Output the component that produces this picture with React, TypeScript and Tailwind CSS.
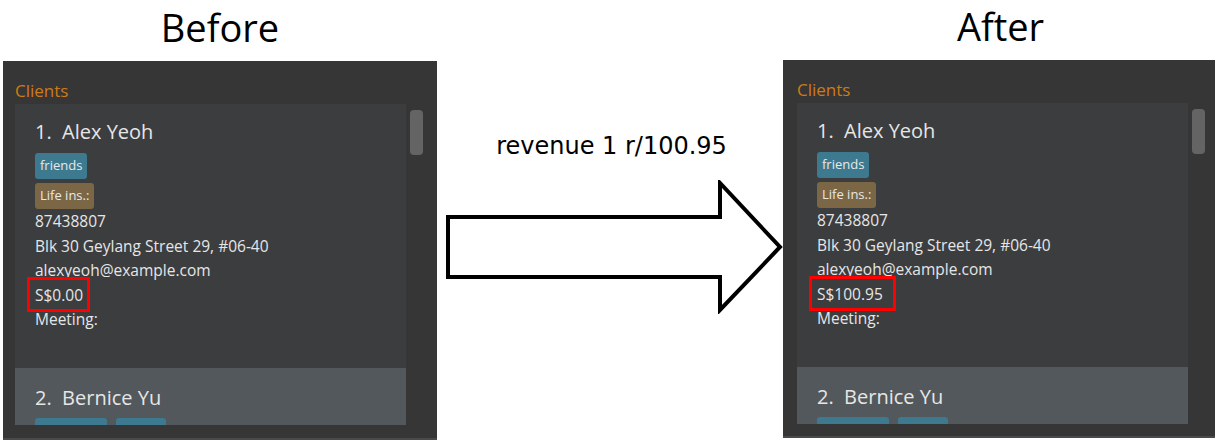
import React from "react";

const ui = { fontFamily: '"Open Sans", "Noto Sans", sans-serif' };

type PanelProps = {
  price: string;
  boxWidth: number;
  inset: string;
  className: string;
};

const Tag = ({ label, color }: { label: string; color: string }) => (
  <span className={`inline-flex h-[26px] items-center rounded-[3px] px-[5px] text-[13px] text-[#e8e8e8] ${color}`}>
    {label}
  </span>
);

const ClientPanel = ({ price, boxWidth, inset, className }: PanelProps) => {
  return (
    <div className={`flex flex-col bg-[#363636] border-b-2 border-[#4a4a4a] ${className}`} style={ui}>
      <p className={`${inset} pt-[18px] mb-[1px] text-[17px] leading-[24px] text-[#cf7b12]`}>Clients</p>
      <div className={`flex ${inset}`}>
        <div className="w-[391px] h-[321px] overflow-hidden bg-[#3c3d3f]">
          {/* first client card */}
          <div className="h-[264px] pl-[20px] pt-[14px] text-[#e6e6e6]">
            <p className="text-[20px] leading-[28px]">
              1.&nbsp;&nbsp;Alex Yeoh
            </p>
            <div className="mt-[7px] flex flex-col items-start gap-[4px]">
              <Tag label="friends" color="bg-[#3d7a8f]" />
              <Tag label="Life ins.:" color="bg-[#7b6646]" />
            </div>
            <div className="text-[15.5px] leading-[24.5px]">
              <p>87438807</p>
              <p>Blk 30 Geylang Street 29, #06-40</p>
              <p>alexyeoh@example.com</p>
              <p className="relative">
                {price}
                <span
                  className="absolute left-[-8px] top-[-6px] bottom-[-5px] border-[3px] border-[#ff0000]"
                  style={{ width: boxWidth }}
                />
              </p>
              <p>Meeting:</p>
            </div>
          </div>
          {/* second client card, cut off */}
          <div className="h-[80px] bg-[#52585b] pl-[20px] pt-[16px] text-[#e6e6e6]">
            <p className="text-[20px] leading-[28px]">2.&nbsp;&nbsp;Bernice Yu</p>
            <div className="mt-[6px] flex gap-[9px]">
              <span className="h-[26px] w-[72px] rounded-[3px] bg-[#3d7a8f]" />
              <span className="h-[26px] w-[50px] rounded-[3px] bg-[#3d7a8f]" />
            </div>
          </div>
        </div>
        <div className="flex-1 pt-[6px] pl-[4px]">
          <div className="h-[45px] w-[13px] rounded-[4px] bg-[#646464]" />
        </div>
      </div>
    </div>
  );
};

const Arrow = () => (
  <svg width="340" height="134" viewBox="0 0 340 134">
    <polygon
      points="4,37 276,37 276,3 336,67 276,130 276,97 4,97"
      fill="white"
      stroke="black"
      strokeWidth="4"
      strokeLinejoin="miter"
    />
  </svg>
);

export default function App() {
  return (
    <div className="flex w-[1218px] h-[445px] bg-white overflow-hidden">
      <div className="w-[440px] flex flex-col">
        <h1 className="h-[61px] pt-[2px] text-center text-[38px] leading-[50px] text-black" style={ui}>
          Before
        </h1>
        <ClientPanel price="S$0.00" boxWidth={63} inset="pl-[12px]" className="ml-[3px] w-[434px] h-[379px]" />
      </div>
      <div className="w-[343px] flex flex-col items-start">
        <p
          className="mt-[131px] w-full text-center text-[24px] leading-[30px] text-black"
          style={{ fontFamily: '"DejaVu Sans", sans-serif' }}
        >
          revenue 1 r/100.95
        </p>
        <div className="mt-[19px] ml-[4px]">
          <Arrow />
        </div>
      </div>
      <div className="w-[435px] flex flex-col">
        <h1 className="h-[60px] pt-[1px] text-center text-[38px] leading-[50px] text-black" style={ui}>
          After
        </h1>
        <ClientPanel price="S$100.95" boxWidth={87} inset="pl-[14px]" className="w-[432px] h-[378px]" />
      </div>
    </div>
  );
}
